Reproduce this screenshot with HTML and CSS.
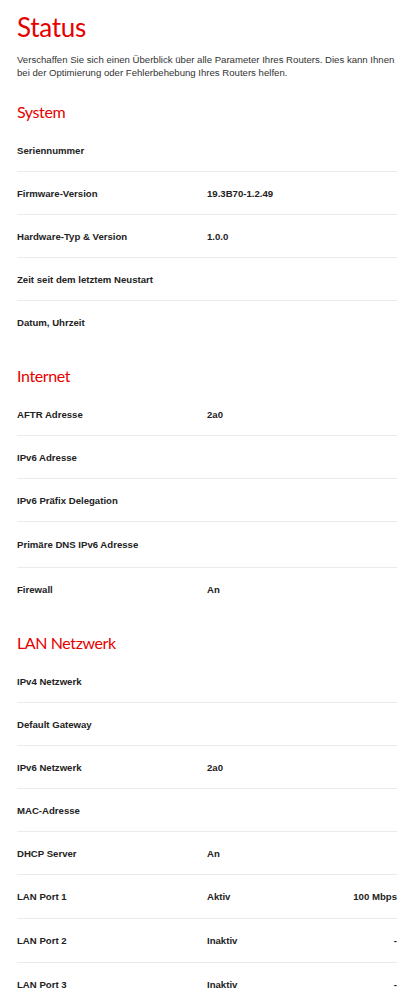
FILE: index.html
```html
<!DOCTYPE html>
<html lang="de">
<head>
<meta charset="utf-8">
<title>Status</title>
<link rel="stylesheet" href="styles.css">
</head>
<body>
<main class="page">
  <h1 class="page-title">Status</h1>
  <p class="intro">Verschaffen Sie sich einen Überblick über alle Parameter Ihres Routers. Dies kann Ihnen bei der Optimierung oder Fehlerbehebung Ihres Routers helfen.</p>

  <section class="group">
    <h2 class="group-title">System</h2>
    <div class="rows">
      <div class="row"><span class="label">Seriennummer</span><span class="value"></span></div>
      <div class="row"><span class="label">Firmware-Version</span><span class="value">19.3B70-1.2.49</span></div>
      <div class="row"><span class="label">Hardware-Typ &amp; Version</span><span class="value">1.0.0</span></div>
      <div class="row"><span class="label">Zeit seit dem letztem Neustart</span><span class="value"></span></div>
      <div class="row"><span class="label">Datum, Uhrzeit</span><span class="value"></span></div>
    </div>
  </section>

  <section class="group">
    <h2 class="group-title">Internet</h2>
    <div class="rows">
      <div class="row"><span class="label">AFTR Adresse</span><span class="value">2a0</span></div>
      <div class="row"><span class="label">IPv6 Adresse</span><span class="value"></span></div>
      <div class="row"><span class="label">IPv6 Präfix Delegation</span><span class="value"></span></div>
      <div class="row row--tall"><span class="label">Primäre DNS IPv6 Adresse</span><span class="value"></span></div>
      <div class="row"><span class="label">Firewall</span><span class="value">An</span></div>
    </div>
  </section>

  <section class="group">
    <h2 class="group-title">LAN Netzwerk</h2>
    <div class="rows">
      <div class="row"><span class="label">IPv4 Netzwerk</span><span class="value"></span></div>
      <div class="row"><span class="label">Default Gateway</span><span class="value"></span></div>
      <div class="row"><span class="label">IPv6 Netzwerk</span><span class="value">2a0</span></div>
      <div class="row"><span class="label">MAC-Adresse</span><span class="value"></span></div>
      <div class="row"><span class="label">DHCP Server</span><span class="value">An</span></div>
      <div class="row row--port"><span class="label">LAN Port 1</span><span class="value">Aktiv</span><span class="extra">100 Mbps</span></div>
      <div class="row row--port"><span class="label">LAN Port 2</span><span class="value">Inaktiv</span><span class="extra">-</span></div>
      <div class="row row--port"><span class="label">LAN Port 3</span><span class="value">Inaktiv</span><span class="extra">-</span></div>
    </div>
  </section>
</main>
</body>
</html>
```

FILE: styles.css
```css
html, body {
  margin: 0;
  padding: 0;
  background: #ffffff;
}

body {
  font-family: "Liberation Sans", Arial, sans-serif;
  color: #333333;
}

.page {
  padding: 0 15px 0 17px;
}

.page-title {
  margin: 11.5px 0 0;
  font-family: Lato, "Open Sans", sans-serif;
  font-weight: 400;
  font-size: 26px;
  line-height: 30px;
  letter-spacing: -0.3px;
  color: #e60000;
}

.intro {
  margin: 11px 0 0;
  font-size: 9.6px;
  line-height: 13px;
  color: #333333;
}

.group-title {
  margin: 23.5px 0 6.5px;
  font-family: Lato, "Open Sans", sans-serif;
  font-weight: 400;
  font-size: 16px;
  line-height: 20px;
  letter-spacing: -0.4px;
  color: #e60000;
}

.rows {
  display: flex;
  flex-direction: column;
}

.row {
  display: grid;
  grid-template-columns: 50% 1fr auto;
  padding: 16px 0 15px;
  border-bottom: 1px solid #ebebeb;
  font-size: 9.6px;
  line-height: 11px;
  font-weight: 700;
  color: #222222;
}

.row:last-child {
  border-bottom: none;
}

.row--tall {
  padding: 17.5px 0 16.5px;
}

.row--port {
  padding: 16.5px 0 15.5px;
}

.extra {
  text-align: right;
}
```
